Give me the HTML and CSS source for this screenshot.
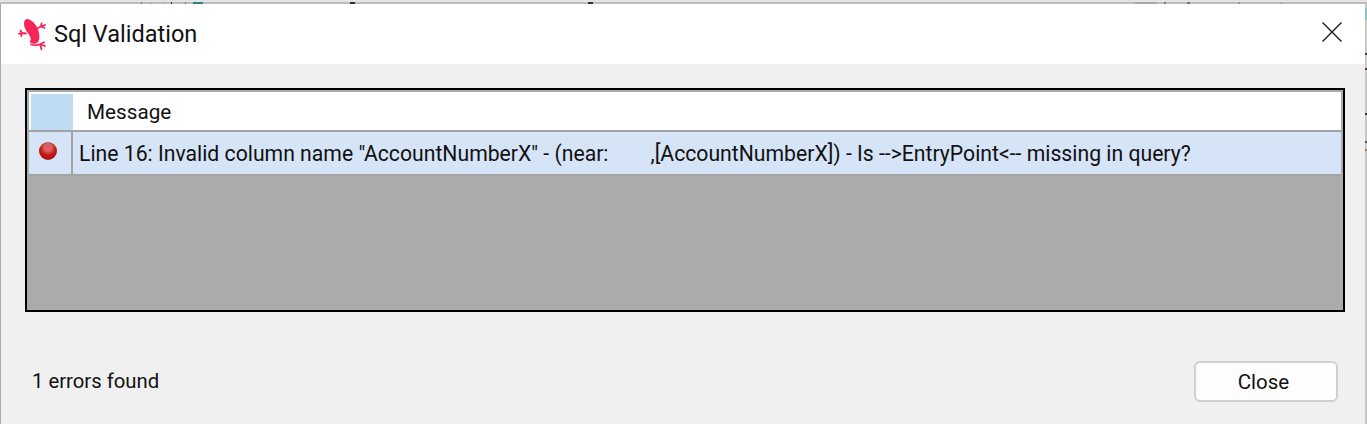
FILE: index.html
```html
<!DOCTYPE html>
<html lang="en">
<head>
<meta charset="utf-8">
<title>Sql Validation</title>
<link rel="stylesheet" href="styles.css">
</head>
<body>
<div class="backdrop-strip"></div>
<main class="window">
  <header class="titlebar">
    <div class="title-left">
      <svg class="logo" viewBox="0 0 29 32" width="29" height="32" aria-hidden="true">
        <path class="logo-body" d="M8 .2C11 -.5 15 2 18 6.500c3 4.500 4 10 3 14.500-.8 3-3.500 4.500-7 3.500-2.500-1-2.500-2.500-1.500-3.500.8-1.500-.5-3.500-2-6C8.500 12 6 9 6 5c0-2 .7-4.200 2-4.800z"/>
        <path class="logo-limb" d="M13 25.500c3 .8 6 .8 9-.2l4-2M22 25.300l5 1.500M22 25.300l1.500 5"/>
        <path class="logo-limb" d="M20 9l3-1.500 .5-3M23 7.500l4-1.500M23 7.500l3.500 1.500"/>
        <path class="logo-limb" d="M8 14.500l-4-.5-1.500-2.500M4 14l-3 .8M4 14l-.8 3"/>
      </svg>
      <h1 class="title">Sql Validation</h1>
    </div>
    <svg class="close-x" viewBox="0 0 20 20" width="20" height="20" aria-hidden="true">
      <path d="M0.500 0.500L19.500 19.500M19.500 0.500L0.500 19.500" stroke="#1c1c1c" stroke-width="1.400" fill="none"/>
    </svg>
  </header>
  <section class="content">
    <div class="grid">
      <div class="grid-head">
        <div class="corner"></div>
        <div class="head-cell">Message</div>
      </div>
      <div class="grid-row">
        <div class="icon-cell"><span class="dot"></span></div>
        <div class="msg-cell">Line 16: Invalid column name "AccountNumberX" - (near:&nbsp;&nbsp;&nbsp;&nbsp;&nbsp;&nbsp;&nbsp;&nbsp;,[AccountNumberX]) - Is --&gt;EntryPoint&lt;-- missing in query?</div>
      </div>
    </div>
    <footer class="footer">
      <span class="status">1 errors found</span>
      <button class="close-btn" type="button">Close</button>
    </footer>
  </section>
</main>
</body>
</html>
```
FILE: styles.css
```css
* { box-sizing: border-box; }
html, body { margin: 0; padding: 0; }
body {
  width: 1367px;
  height: 424px;
  overflow: hidden;
  display: flex;
  flex-direction: column;
  background: linear-gradient(#c8c8c8 0 8px, #8cc4c4 8px 20px, #c8c8c8 20px 53px, #4a3a3a 53px 55px, #c8c8c8 55px 68px, #4a3a3a 68px 70px, #c8c8c8 70px 113px, #333 113px 115px, #c8c8c8 115px 141px, #555 141px 143px, #c8c8c8 143px 149px, #8a7a5a 149px 151px, #c8c8c8 151px);
  font-family: Roboto, "Open Sans", "Liberation Sans", sans-serif;
  color: #000;
}
.backdrop-strip {
  height: 4px;
  flex: none;
  background:
    linear-gradient(90deg,
      transparent 0 141px, #777 141px 142px, transparent 142px 150px, #999 150px 151px,
      transparent 151px 164px, #aaa 164px 165px, transparent 165px 171px, #234 171px 172px,
      transparent 172px 185px, #777 185px 186px, transparent 186px 193px, #2f8080 193px 203px,
      transparent 203px 350px, #3a2a2a 350px 355px, transparent 355px 588px, #3a2a2a 588px 593px,
      transparent 593px 1135px, #a8a8a8 1135px 1157px, transparent 1157px 1164px, #777 1164px 1166px,
      transparent 1166px 1187px, #777 1187px 1190px, transparent 1190px 1238px, #999 1238px 1240px,
      transparent 1240px 1280px, #b0b0b0 1280px 1282px, transparent 1282px) 0 2px / 100% 2px no-repeat,
    linear-gradient(#e4e4e4 0 2px, #bdbdbd 2px 4px);
}
.window {
  flex: 1;
  width: 1365px;
  border-left: 1px solid #a8a8a8;
  display: flex;
  flex-direction: column;
  min-height: 0;
}
.titlebar {
  height: 60px;
  flex: none;
  background: #fff;
  display: flex;
  align-items: center;
  justify-content: space-between;
  padding: 0 23px 0 17px;
}
.title-left { display: flex; align-items: center; gap: 7px; }
.logo { display: block; margin-top: 2px; }
.logo-body { fill: #f72559; }
.logo-limb { fill: none; stroke: #f72559; stroke-width: 1.800; stroke-linecap: round; stroke-linejoin: round; }
.title {
  margin: 2px 0 0;
  font-size: 23.500px;
  font-weight: 400;
  line-height: 1;
  color: #111;
}
.close-x { display: block; margin-top: -4px; }
.content {
  flex: 1;
  background: #f0f0f0;
  padding: 24px 20px 0 24px;
  display: flex;
  flex-direction: column;
}
.grid {
  height: 224px;
  flex: none;
  background: #ababab;
  border: 2px solid #000;
  padding: 2px 2px 0 2px;
  color: #111;
}
.grid-head {
  height: 38px;
  background: #fff;
  display: flex;
}
.corner { width: 44px; background: linear-gradient(90deg, #fff 0 2px, #bddcf3 2px); border-top: 2px solid #fff; }
.head-cell { padding-left: 14px; line-height: 40px; font-size: 20.700px; }
.grid-row {
  height: 46px;
  border-top: 2px solid #a3a3a3;
  border-bottom: 2px solid #a3a3a3;
  background: #d6e4f7;
  display: flex;
}
.icon-cell {
  width: 44px;
  flex: none;
  border-right: 2px solid #a3a3a3;
  display: flex;
  align-items: flex-start;
  justify-content: flex-start;
  padding: 10px 0 0 10px;
}
.dot {
  width: 18px;
  height: 18px;
  border-radius: 50%;
  background: radial-gradient(circle at 50% 30%, #d76060 0 25%, #c62020 45%, #b01010 70%, #a53a3a 100%);
}
.msg-cell { padding-left: 6px; line-height: 44px; white-space: nowrap; font-size: 21.200px; }
.footer {
  flex: 1;
  display: flex;
  align-items: flex-start;
  justify-content: space-between;
  padding: 49px 7px 0 7px;
}
.status { font-size: 20.300px; margin-top: 8px; color: #111; }
.close-btn {
  width: 144px;
  height: 41px;
  background: #fdfdfd;
  border: 2px solid #d0d0d0;
  border-radius: 6px;
  font: inherit;
  font-size: 20.500px;
  color: #111;
  padding: 0 5px 0 0;
}
```
